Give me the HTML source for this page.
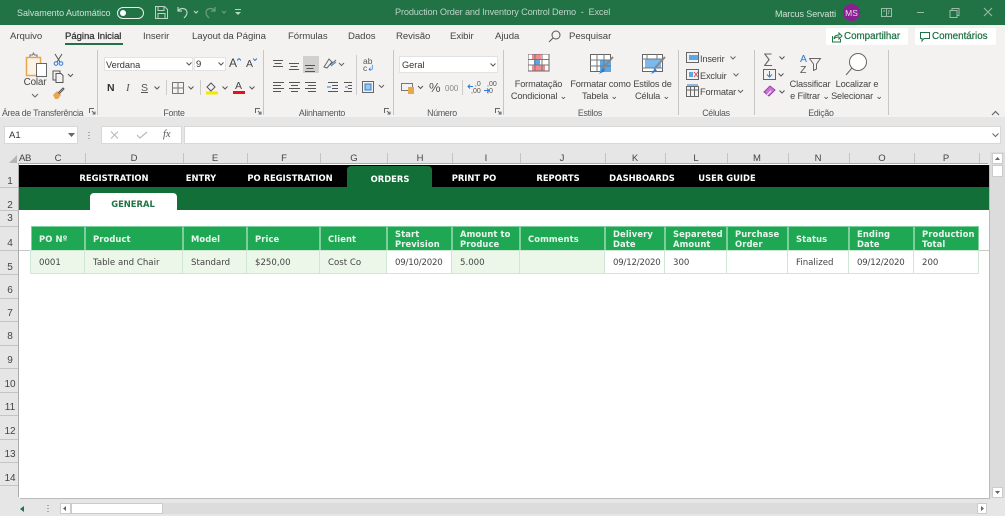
<!DOCTYPE html>
<html><head><meta charset="utf-8"><style>
html,body{margin:0;padding:0}
body{width:1005px;height:516px;overflow:hidden;position:relative;background:#e6e6e6;font-family:"Liberation Sans",sans-serif;color:#444;filter:blur(.3px)}
.t,.b,svg{position:absolute}
.t{white-space:nowrap;line-height:12px}
.c{transform:translateX(-50%);text-align:center}
.rb{font-size:9.2px;color:#444;letter-spacing:-.15px}
.tab{font-size:9.6px;color:#444;top:31px;letter-spacing:-.05px}
.grp{font-size:8.8px;color:#555;top:107px;letter-spacing:-.25px}
.nav{font:bold 8.4px "DejaVu Sans",sans-serif;color:#fff;top:173px}
.h{background:#1ea854;border:1px solid #7fcf9d;border-bottom:none;box-sizing:border-box;top:226px;height:24px;color:#eaf5ee;font:bold 8.4px/10px "DejaVu Sans",sans-serif;padding:0 0 0 7px;display:flex;align-items:center;letter-spacing:.1px}
.d{top:250px;height:24px;box-sizing:border-box;border:1px solid #cfe8d5;border-left:none;color:#444;font:8.6px/24px "DejaVu Sans",sans-serif;padding-left:8px;background:#fff}
.dt{letter-spacing:-.2px}
.g{background:#edf7e9}
.col{font-size:9.5px;color:#444;top:152.5px}
.rn{font-size:10px;color:#444;left:1px;width:18px;text-align:center}
.rl{left:0;width:19px;height:1px;background:#c4c4c4}
.cl{top:153px;width:1px;height:11px;background:#c4c4c4}
</style></head><body>
<div class="b" style="left:0;top:0;width:1005px;height:25px;background:#217346"></div>
<div class="t" style="left:17px;top:7px;font-size:9px;color:#cfe0d6;letter-spacing:-.05px">Salvamento Automático</div>
<div class="b" style="left:117px;top:7px;width:25px;height:10px;border:1px solid #e8f0eb;border-radius:7px"></div>
<div class="b" style="left:120px;top:9.5px;width:6px;height:6px;background:#fff;border-radius:50%"></div>
<svg style="left:155px;top:6px" width="13" height="13" fill="none" stroke="#bcd3c6"><path d="M.5.5h9l3 3v9H.5zM3 .5v4h6v-4M3 12.500v-5h7v5"/></svg>
<svg style="left:176px;top:6px" width="24" height="13" fill="none" stroke="#bcd3c6" stroke-width="1.200"><path d="M2 1v4h4M2 5c3-4 9-3 9 2 0 2-2 4-3 5M18 5l2 2 2-2"/></svg>
<svg style="left:205px;top:6px" width="24" height="13" fill="none" stroke="#6d9f83" stroke-width="1.200"><path d="M10 1v4H6M10 5C7 1 1 2 1 7c0 2 2 4 3 5M17 5l2 2 2-2"/></svg>
<svg style="left:235px;top:9px" width="7" height="7" fill="#bcd3c6"><path d="M0 0h6v1H0zM0 3h6L3 6z"/></svg>
<div class="t" style="left:395px;top:6px;font-size:9.2px;color:#bcd3c6;letter-spacing:-.15px">Production Order and Inventory Control Demo &nbsp;-&nbsp; Excel</div>
<div class="t" style="left:775px;top:7.5px;font-size:9px;color:#cfe0d6;letter-spacing:-.1px">Marcus Servatti</div>
<div class="b" style="left:843px;top:4px;width:17px;height:17px;border-radius:50%;background:#8a1f92"></div>
<div class="t c" style="left:851.500px;top:7px;font-size:8.500px;color:#eadcec">MS</div>
<svg style="left:880px;top:7px" width="113" height="11" fill="none" stroke="#9dbdaa"><path d="M1.500 1.500h10v8h-10zM6.500 2v7M3 4h2M8 4h2M9 5.500l-1 1.500"/><path d="M37 5.500h7M70 3.500h7v7h-7zM72 3.500v-2h7v7h-2M104 1l8 8M112 1l-8 8"/></svg>

<!-- ribbon -->
<div class="b" style="left:0;top:25px;width:1005px;height:92px;background:#f3f2f1"></div>
<div class="t tab" style="left:10px">Arquivo</div>
<div class="t tab" style="left:65px;font-weight:400;color:#333;-webkit-text-stroke:.25px #333">Página Inicial</div>
<div class="b" style="left:65px;top:43px;width:58px;height:2px;background:#217346"></div>
<div class="t tab" style="left:143px">Inserir</div>
<div class="t tab" style="left:192px">Layout da Página</div>
<div class="t tab" style="left:288px">Fórmulas</div>
<div class="t tab" style="left:348px">Dados</div>
<div class="t tab" style="left:396px">Revisão</div>
<div class="t tab" style="left:450px">Exibir</div>
<div class="t tab" style="left:495px">Ajuda</div>
<svg style="left:548px;top:30px" width="13" height="13" fill="none" stroke="#555"><circle cx="8" cy="5" r="4"/><path d="M5 8l-4 4"/></svg>
<div class="t tab" style="left:569px">Pesquisar</div>
<div class="b" style="left:826px;top:28px;width:82px;height:17px;background:#fff;border-radius:2px"></div>
<svg style="left:831px;top:31px" width="12" height="12" fill="none" stroke="#217346"><path d="M1.500 5v6h8V8M3 8c0-3 2-4 5-4V2l3 3-3 3V6C6 6 4 6 3 8z"/></svg>
<div class="t" style="left:844px;top:30.500px;font-size:9.800px;color:#217346;-webkit-text-stroke:.25px #217346">Compartilhar</div>
<div class="b" style="left:915px;top:28px;width:81px;height:17px;background:#fff;border-radius:2px"></div>
<svg style="left:920px;top:32px" width="11" height="11" fill="none" stroke="#217346"><path d="M.500.500h9v6H4L2 9V6.500H.500z"/></svg>
<div class="t" style="left:932px;top:30.500px;font-size:9.800px;color:#217346;-webkit-text-stroke:.25px #217346">Comentários</div>

<!-- separators -->
<div class="b" style="left:97px;top:50px;width:1px;height:65px;background:#c8c6c4"></div>
<div class="b" style="left:263px;top:50px;width:1px;height:65px;background:#c8c6c4"></div>
<div class="b" style="left:393px;top:50px;width:1px;height:65px;background:#c8c6c4"></div>
<div class="b" style="left:503px;top:50px;width:1px;height:65px;background:#c8c6c4"></div>
<div class="b" style="left:678px;top:50px;width:1px;height:65px;background:#c8c6c4"></div>
<div class="b" style="left:754px;top:50px;width:1px;height:65px;background:#c8c6c4"></div>
<div class="b" style="left:888px;top:50px;width:1px;height:65px;background:#c8c6c4"></div>

<!-- clipboard -->
<svg style="left:25px;top:52px" width="23" height="26" fill="none"><path d="M1.500 5.500h14v18H1.500z" stroke="#e6a455" stroke-width="1.500" fill="#fdf3e4"/><path d="M5 5V3h2.500l1-2 1 2H12v2" stroke="#777"/><path d="M11.500 11.500h10v13h-10z" stroke="#666" fill="#fff"/></svg>
<div class="t rb c" style="left:35px;top:77px;font-size:9.800px">Colar</div>
<svg style="left:31px;top:93px" width="8" height="5" fill="none" stroke="#666"><path d="M1 1l3 3 3-3"/></svg>
<svg style="left:53px;top:53px" width="11" height="13" fill="none" stroke="#555"><path d="M2 1l5 8M9 1L4 9"/><circle cx="3" cy="10.500" r="1.800" stroke="#2b7cd3"/><circle cx="8" cy="10.500" r="1.800" stroke="#2b7cd3"/></svg>
<svg style="left:52px;top:70px" width="22" height="13" fill="none" stroke="#555"><path d="M1 1h7v9H1z"/><path d="M4 3.500h5l2 2v7H4z" fill="#f3f2f1"/><path d="M16 4l2.500 2.500L21 4"/></svg>
<svg style="left:52px;top:87px" width="13" height="13" fill="none"><path d="M1 8l4-4 4 4-3 4H3z" fill="#eda64b"/><path d="M6 6l5-5 1 1-5 5" stroke="#555"/></svg>
<div class="t grp" style="left:2px">Área de Transferência</div>
<svg style="left:89px;top:108px" width="7" height="7" fill="none" stroke="#666"><path d="M.500 5V.500H5M3 3l3 3M6 3.500V6H3.500"/></svg>

<!-- font -->
<div class="b" style="left:104px;top:57px;width:89px;height:14px;background:#fff;border:1px solid #e2e2e2;box-sizing:border-box"></div>
<div class="t" style="left:106px;top:58.500px;font-size:9.200px;color:#333">Verdana</div>
<svg style="left:186px;top:62px" width="6" height="4" fill="none" stroke="#555"><path d="M.500.500L3 3 5.500.500"/></svg>
<div class="b" style="left:194px;top:57px;width:32px;height:14px;background:#fff;border:1px solid #e2e2e2;box-sizing:border-box"></div>
<div class="t" style="left:196px;top:58.500px;font-size:9.500px;color:#333">9</div>
<svg style="left:218px;top:62px" width="6" height="4" fill="none" stroke="#555"><path d="M.500.500L3 3 5.500.500"/></svg>
<div class="t" style="left:229px;top:57px;font-size:12px;color:#444">A</div>
<svg style="left:237px;top:58px" width="4" height="3" fill="none" stroke="#2b7cd3"><path d="M0 2.500L2 .5l2 2"/></svg>
<div class="t" style="left:246px;top:58px;font-size:10.500px;color:#444">A</div>
<svg style="left:253px;top:58px" width="4" height="3" fill="none" stroke="#2b7cd3"><path d="M0 .5l2 2 2-2"/></svg>
<div class="t" style="left:107px;top:82px;font:bold 10.500px/12px 'Liberation Sans',sans-serif;color:#333">N</div>
<div class="t" style="left:126px;top:82px;font:italic 11px/12px 'Liberation Serif',serif;color:#555">I</div>
<div class="t" style="left:141px;top:82px;font-size:10.500px;color:#555;text-decoration:underline">S</div>
<svg style="left:154px;top:86px" width="6" height="4" fill="none" stroke="#555"><path d="M.500.500L3 3 5.500.500"/></svg>
<div class="b" style="left:166px;top:80px;width:1px;height:15px;background:#ccc"></div>
<svg style="left:172px;top:82px" width="12" height="12" fill="none" stroke="#777"><path d="M.500.500h11v11H.500zM6 .500v11M.500 6h11"/></svg>
<svg style="left:188px;top:86px" width="6" height="4" fill="none" stroke="#555"><path d="M.500.500L3 3 5.500.500"/></svg>
<div class="b" style="left:200px;top:80px;width:1px;height:15px;background:#ccc"></div>
<svg style="left:206px;top:81px" width="12" height="14" fill="none"><path d="M1 6l4-4 4 4-4 4z" stroke="#555"/><rect x="0" y="10.500" width="12" height="3" fill="#f5e800"/></svg>
<svg style="left:222px;top:86px" width="6" height="4" fill="none" stroke="#555"><path d="M.500.500L3 3 5.500.500"/></svg>
<div class="t" style="left:235px;top:80px;font-size:10.500px;color:#444">A</div>
<div class="b" style="left:233px;top:91px;width:12px;height:3px;background:#e80f1a"></div>
<svg style="left:249px;top:86px" width="6" height="4" fill="none" stroke="#555"><path d="M.500.500L3 3 5.500.500"/></svg>
<div class="t grp c" style="left:174px">Fonte</div>
<svg style="left:255px;top:108px" width="7" height="7" fill="none" stroke="#666"><path d="M.500 5V.500H5M3 3l3 3M6 3.500V6H3.500"/></svg>

<!-- alignment -->
<div class="b" style="left:303px;top:56px;width:16px;height:17px;background:#d2d0ce"></div>
<svg style="left:272px;top:60px" width="48" height="12" fill="none" stroke="#555"><path d="M1 .500h10M2.500 3.500h7M1 6.500h10M17 3.500h10M18.500 6.500h7M17 9.500h10M33 5.500h10M34.500 8.500h7M33 11.500h10"/></svg>
<svg style="left:323px;top:57px" width="22" height="13" fill="none" stroke="#666"><path d="M1 10l5-8 3 3-5 6zM7 8l6-5" /><path d="M8 9l5-4" stroke="#2b7cd3"/><path d="M16 6l2.500 2.500L21 6"/></svg>
<svg style="left:272px;top:82px" width="80" height="11" fill="none" stroke="#555"><path d="M1 .500h11M1 3.500h8M1 6.500h11M1 9.500h8M17 .500h11M19 3.500h7M17 6.500h11M19 9.500h7M33 .500h11M36 3.500h8M33 6.500h11M36 9.500h8M56 .500h10M60 3.500h6M60 6.500h6M56 9.500h10M72 .500h8M76 3.500h4M76 6.500h4M72 9.500h8"/><path d="M59 5h-4M73 5h3" stroke="#2b7cd3"/></svg>
<div class="b" style="left:356px;top:55px;width:1px;height:40px;background:#ccc"></div>
<div class="t" style="left:363px;top:58px;font-size:8.500px;line-height:7px;color:#555">ab<br>c<span style="color:#2b7cd3">↲</span></div>
<svg style="left:362px;top:81px" width="24" height="12" fill="none" stroke="#666"><path d="M.500.500h11v11H.500z"/><path d="M3 3h6v6H3z" fill="#9cc7ec" stroke="#2b7cd3"/><path d="M17 4l2.500 2.500L22 4"/></svg>
<div class="t grp c" style="left:322px">Alinhamento</div>
<svg style="left:384px;top:108px" width="7" height="7" fill="none" stroke="#666"><path d="M.500 5V.500H5M3 3l3 3M6 3.500V6H3.500"/></svg>

<!-- number -->
<div class="b" style="left:399px;top:56px;width:99px;height:17px;background:#fff;border:1px solid #e2e2e2;box-sizing:border-box"></div>
<div class="t" style="left:402px;top:58.500px;font-size:9.200px;color:#333">Geral</div>
<svg style="left:490px;top:63px" width="6" height="4" fill="none" stroke="#555"><path d="M.500.500L3 3 5.500.500"/></svg>
<svg style="left:401px;top:82px" width="24" height="12" fill="none"><rect x=".5" y="1.500" width="11" height="7" stroke="#777"/><rect x="7" y="5" width="6" height="7" fill="#eda64b"/><path d="M17 4l2.500 2.500L22 4" stroke="#555"/></svg>
<div class="t" style="left:429px;top:81px;font-size:13px;line-height:13px;color:#555">%</div>
<div class="t" style="left:445px;top:83px;font-size:8px;color:#888">000</div>
<div class="b" style="left:462px;top:80px;width:1px;height:15px;background:#ccc"></div>
<div class="t" style="left:471px;top:81px;font-size:7px;line-height:7px;color:#555;text-align:right">,0<br>,00</div>
<svg style="left:467px;top:84px" width="6" height="6" fill="none" stroke="#2b7cd3"><path d="M6 2.500H1M3 .5L1 2.500l2 2"/></svg>
<div class="t" style="left:487px;top:81px;font-size:7px;line-height:7px;color:#555">,00<br>,0</div>
<svg style="left:484px;top:88px" width="6" height="6" fill="none" stroke="#2b7cd3"><path d="M0 2.500h5M3 .5l2 2-2 2"/></svg>
<div class="t grp c" style="left:442px">Número</div>
<svg style="left:495px;top:108px" width="7" height="7" fill="none" stroke="#666"><path d="M.500 5V.500H5M3 3l3 3M6 3.500V6H3.500"/></svg>

<!-- styles -->
<svg style="left:528px;top:54px" width="22" height="18"><rect x="0" y="0" width="21" height="17" fill="#fff" stroke="#666"/><rect x="4" y="0.500" width="9" height="5" fill="#f28b90"/><rect x="4" y="11" width="13" height="5.500" fill="#f28b90"/><rect x="6" y="6" width="6" height="5" fill="#5aa7e6"/><path d="M7 0v17M14 0v17M0 5.500h21M0 11h21" stroke="#777" fill="none"/></svg>
<div class="t rb c" style="left:538.500px;top:78px">Formatação</div>
<div class="t rb c" style="left:539px;top:89.500px">Condicional ⌄</div>
<svg style="left:590px;top:54px" width="24" height="22" fill="none"><rect x=".5" y=".5" width="20" height="17" fill="#fff" stroke="#666"/><rect x="10" y="6" width="11" height="12" fill="#5aa7e6"/><path d="M7 0v17M14 0v17M0 6h21M0 12h21" stroke="#777"/><path d="M23 3L12 15" stroke="#888" stroke-width="2"/><path d="M13 14l-4 6 6-3z" fill="#2b7cd3"/></svg>
<div class="t rb c" style="left:600.500px;top:78px">Formatar como</div>
<div class="t rb c" style="left:600px;top:89.500px">Tabela ⌄</div>
<svg style="left:642px;top:54px" width="24" height="22" fill="none"><rect x=".5" y=".5" width="20" height="17" fill="#fff" stroke="#666"/><rect x="3" y="5" width="16" height="9" fill="#7bb8ec"/><path d="M0 5h21M0 14h21M5 0v5M15 0v5" stroke="#777"/><path d="M23 3L12 15" stroke="#888" stroke-width="2"/><path d="M13 14l-4 6 6-3z" fill="#2b7cd3"/></svg>
<div class="t rb c" style="left:652.500px;top:78px">Estilos de</div>
<div class="t rb c" style="left:652.500px;top:89.500px">Célula ⌄</div>
<div class="t grp c" style="left:590px">Estilos</div>

<!-- cells -->
<svg style="left:686px;top:52px" width="13" height="48" fill="none"><rect x=".5" y=".5" width="12" height="10" stroke="#666"/><rect x="3" y="3" width="9" height="5" fill="#5aa7e6"/><rect x=".5" y="17.500" width="12" height="10" stroke="#666"/><rect x="3" y="20" width="4" height="5" fill="#5aa7e6"/><path d="M8 20l4 5M12 20l-4 5" stroke="#e04848"/><rect x=".5" y="34.500" width="12" height="10" stroke="#666"/><path d="M.5 38h12M4.500 34v10M8.500 34v10" stroke="#666"/><path d="M1 33h11" stroke="#2b7cd3"/></svg>
<div class="t rb" style="left:700px;top:52.500px">Inserir</div>
<div class="t rb" style="left:700px;top:69.500px">Excluir</div>
<div class="t rb" style="left:700px;top:86px">Formatar</div>
<svg style="left:730px;top:56px" width="14" height="39" fill="none" stroke="#666"><path d="M.500.500L3 3 5.500.500M3.500 17.500L6 20 8.500 17.500M8 34l2.500 2.500L13 34"/></svg>
<div class="t grp c" style="left:716px">Células</div>

<!-- editing -->
<div class="t" style="left:763px;top:51px;font-size:14px;line-height:14px;color:#666">∑</div>
<svg style="left:779px;top:56px" width="6" height="4" fill="none" stroke="#555"><path d="M.500.500L3 3 5.500.500"/></svg>
<svg style="left:763px;top:69px" width="13" height="11" fill="none"><rect x=".5" y=".5" width="12" height="10" stroke="#666"/><path d="M6.500 2v6M4 5.500l2.500 2.500L9 5.500" stroke="#2b7cd3"/></svg>
<svg style="left:778px;top:73px" width="6" height="4" fill="none" stroke="#555"><path d="M.500.500L3 3 5.500.500"/></svg>
<svg style="left:763px;top:85px" width="13" height="12" fill="none"><path d="M1 7l6-6 5 4-6 6z" fill="#c878d2" stroke="#a03bb0"/><path d="M4 10l4-4" stroke="#fff"/></svg>
<svg style="left:779px;top:90px" width="6" height="4" fill="none" stroke="#555"><path d="M.500.500L3 3 5.500.500"/></svg>
<div class="t" style="left:800px;top:54px;font-size:10.500px;color:#2b7cd3;line-height:11px">A</div>
<div class="t" style="left:800px;top:65px;font-size:10.500px;color:#555;line-height:11px">Z</div>
<svg style="left:809px;top:58px" width="13" height="13" fill="none" stroke="#666"><path d="M.5.500h11L7.500 6v5l-3 1.500V6z"/></svg>
<div class="t rb c" style="left:810px;top:78px">Classificar</div>
<div class="t rb c" style="left:810px;top:89.500px">e Filtrar ⌄</div>
<svg style="left:845px;top:52px" width="24" height="24" fill="none" stroke="#666"><circle cx="13" cy="10" r="8.500" fill="#fff"/><path d="M7 16l-6 7"/></svg>
<div class="t rb c" style="left:857px;top:78px">Localizar e</div>
<div class="t rb c" style="left:857px;top:89.500px">Selecionar ⌄</div>
<div class="t grp c" style="left:821px">Edição</div>
<svg style="left:991px;top:110px" width="9" height="6" fill="none" stroke="#666" stroke-width="1.200"><path d="M1 5l3.500-3.500L8 5"/></svg>

<!-- formula bar -->
<div class="b" style="left:4px;top:126px;width:74px;height:18px;background:#fff;border:1px solid #d8d8d8;box-sizing:border-box"></div>
<div class="t" style="left:9px;top:129.500px;font-size:9.500px;color:#333">A1</div>
<svg style="left:68px;top:133px" width="7" height="4" fill="#666"><path d="M0 0h7L3.500 4z"/></svg>
<svg style="left:88px;top:132px" width="3" height="8" fill="#aaa"><path d="M0 0h2v1H0zM0 3h2v1H0zM0 6h2v1H0z"/></svg>
<div class="b" style="left:101px;top:126px;width:81px;height:18px;background:#fff;border:1px solid #d8d8d8;box-sizing:border-box"></div>
<svg style="left:110px;top:131px" width="40" height="9" fill="none" stroke="#bbb" stroke-width="1.200"><path d="M1 .5l7 7M8 .5l-7 7M27 4l3 3 7-6"/></svg>
<div class="t" style="left:163px;top:129px;font:italic 10.500px/12px 'Liberation Serif',serif;color:#555">fx</div>
<div class="b" style="left:184px;top:126px;width:817px;height:18px;background:#fff;border:1px solid #d8d8d8;box-sizing:border-box"></div>
<svg style="left:992px;top:133px" width="7" height="5" fill="none" stroke="#666"><path d="M.5.500L3.500 3.500 6.500.500"/></svg>

<!-- headers -->
<div class="b" style="left:0;top:152px;width:989px;height:12px;background:#e6e6e6"></div>
<div class="b" style="left:0;top:164px;width:19px;height:334px;background:#e6e6e6"></div>
<svg style="left:9px;top:155px" width="9" height="8" fill="#b5b5b5"><path d="M8 0v8H0z"/></svg>
<div class="t" style="left:19px;top:152.500px;font-size:9.500px;color:#444;letter-spacing:-.3px">AB</div>
<div class="t col c" style="left:58px">C</div>
<div class="t col c" style="left:134px">D</div>
<div class="t col c" style="left:215px">E</div>
<div class="t col c" style="left:284px">F</div>
<div class="t col c" style="left:354px">G</div>
<div class="t col c" style="left:420px">H</div>
<div class="t col c" style="left:486px">I</div>
<div class="t col c" style="left:562px">J</div>
<div class="t col c" style="left:635px">K</div>
<div class="t col c" style="left:696px">L</div>
<div class="t col c" style="left:757px">M</div>
<div class="t col c" style="left:818px">N</div>
<div class="t col c" style="left:882px">O</div>
<div class="t col c" style="left:946px">P</div>
<div class="b cl" style="left:85px"></div><div class="b cl" style="left:183px"></div><div class="b cl" style="left:247px"></div><div class="b cl" style="left:320px"></div><div class="b cl" style="left:387px"></div><div class="b cl" style="left:452px"></div><div class="b cl" style="left:520px"></div><div class="b cl" style="left:605px"></div><div class="b cl" style="left:665px"></div><div class="b cl" style="left:727px"></div><div class="b cl" style="left:788px"></div><div class="b cl" style="left:849px"></div><div class="b cl" style="left:914px"></div><div class="b cl" style="left:979px"></div>

<div class="b rl" style="top:187px"></div><div class="b rl" style="top:210px"></div><div class="b rl" style="top:226px"></div><div class="b rl" style="top:250px"></div><div class="b rl" style="top:274px"></div><div class="b rl" style="top:298px"></div><div class="b rl" style="top:321px"></div><div class="b rl" style="top:345px"></div><div class="b rl" style="top:368px"></div><div class="b rl" style="top:392px"></div><div class="b rl" style="top:415px"></div><div class="b rl" style="top:439px"></div><div class="b rl" style="top:462px"></div><div class="b rl" style="top:485px"></div>
<div class="t rn" style="top:176px">1</div><div class="t rn" style="top:199.500px">2</div><div class="t rn" style="top:213px">3</div><div class="t rn" style="top:238px">4</div><div class="t rn" style="top:262px">5</div><div class="t rn" style="top:285px">6</div><div class="t rn" style="top:308px">7</div><div class="t rn" style="top:331px">8</div><div class="t rn" style="top:355px">9</div><div class="t rn" style="top:379px">10</div><div class="t rn" style="top:402px">11</div><div class="t rn" style="top:426px">12</div><div class="t rn" style="top:449px">13</div><div class="t rn" style="top:473px">14</div>

<!-- sheet -->
<div class="b" style="left:19px;top:164px;width:970px;height:334px;background:#fff;box-shadow:-1px -1px 0 #aaa,1px 1px 0 #bbb"></div>
<div class="b" style="left:19px;top:165px;width:970px;height:22px;background:#000"></div>
<div class="b" style="left:19px;top:187px;width:970px;height:23px;background:#126f37"></div>
<div class="b" style="left:347px;top:166px;width:85px;height:22px;background:#126f37;border-radius:4px 4px 0 0"></div>
<div class="b" style="left:90px;top:193px;width:87px;height:18px;background:#fff;border-radius:4px 4px 0 0"></div>
<div class="t nav c" style="left:114px">REGISTRATION</div>
<div class="t nav c" style="left:201px">ENTRY</div>
<div class="t nav c" style="left:290px">PO REGISTRATION</div>
<div class="t nav c" style="left:390px;top:173.500px">ORDERS</div>
<div class="t nav c" style="left:474px">PRINT PO</div>
<div class="t nav c" style="left:558px">REPORTS</div>
<div class="t nav c" style="left:642px">DASHBOARDS</div>
<div class="t nav c" style="left:727px">USER GUIDE</div>
<div class="t nav c" style="left:133px;top:199px;color:#217346">GENERAL</div>

<div class="b" style="left:19px;top:250px;width:970px;height:1px;background:#c8c8c8"></div>

<div class="b h" style="left:31px;width:54px">PO Nº</div>
<div class="b h" style="left:85px;width:98px">Product</div>
<div class="b h" style="left:183px;width:64px">Model</div>
<div class="b h" style="left:247px;width:73px">Price</div>
<div class="b h" style="left:320px;width:67px">Client</div>
<div class="b h" style="left:387px;width:65px">Start<br>Prevision</div>
<div class="b h" style="left:452px;width:68px">Amount to<br>Produce</div>
<div class="b h" style="left:520px;width:85px">Comments</div>
<div class="b h" style="left:605px;width:60px">Delivery<br>Date</div>
<div class="b h" style="left:665px;width:62px">Separeted<br>Amount</div>
<div class="b h" style="left:727px;width:61px">Purchase<br>Order</div>
<div class="b h" style="left:788px;width:61px">Status</div>
<div class="b h" style="left:849px;width:65px">Ending<br>Date</div>
<div class="b h" style="left:914px;width:65px">Production<br>Total</div>

<div class="b d g" style="left:30px;width:55px;border-left:1px solid #cfe8d5">0001</div>
<div class="b d g" style="left:85px;width:98px">Table and Chair</div>
<div class="b d g" style="left:183px;width:64px">Standard</div>
<div class="b d g" style="left:247px;width:73px">$250,00</div>
<div class="b d g" style="left:320px;width:67px">Cost Co</div>
<div class="b d dt" style="left:387px;width:65px">09/10/2020</div>
<div class="b d g" style="left:452px;width:68px">5.000</div>
<div class="b d g" style="left:520px;width:85px"></div>
<div class="b d dt" style="left:605px;width:60px">09/12/2020</div>
<div class="b d" style="left:665px;width:62px">300</div>
<div class="b d" style="left:727px;width:61px"></div>
<div class="b d" style="left:788px;width:61px">Finalized</div>
<div class="b d dt" style="left:849px;width:65px">09/12/2020</div>
<div class="b d" style="left:914px;width:65px">200</div>

<!-- scrollbars -->
<div class="b" style="left:990px;top:152px;width:15px;height:346px;background:#dcdcdc"></div>
<div class="b" style="left:992px;top:153px;width:11px;height:11px;background:#fff;border:1px solid #ccc;box-sizing:border-box"></div>
<svg style="left:995px;top:157px" width="5" height="3" fill="#666"><path d="M2.500 0L5 3H0z"/></svg>
<div class="b" style="left:992px;top:165px;width:11px;height:12px;background:#fff;border:1px solid #ccc;box-sizing:border-box"></div>
<div class="b" style="left:992px;top:487px;width:11px;height:11px;background:#fff;border:1px solid #ccc;box-sizing:border-box"></div>
<svg style="left:995px;top:491px" width="5" height="3" fill="#666"><path d="M0 0h5L2.500 3z"/></svg>

<div class="b" style="left:0;top:499px;width:1005px;height:17px;background:#e6e6e6"></div>
<svg style="left:20px;top:506px" width="4" height="6" fill="#217346"><path d="M4 0v6L0 3z"/></svg>
<svg style="left:47px;top:505px" width="2" height="8" fill="#aaa"><path d="M0 0h2v1H0zM0 3h2v1H0zM0 6h2v1H0z"/></svg>
<div class="b" style="left:60px;top:503px;width:927px;height:11px;background:#dcdcdc"></div>
<div class="b" style="left:60px;top:503px;width:11px;height:11px;background:#fff;border:1px solid #ccc;box-sizing:border-box"></div>
<svg style="left:63px;top:506px" width="3" height="5" fill="#666"><path d="M3 0v5L0 2.500z"/></svg>
<div class="b" style="left:71px;top:503px;width:92px;height:11px;background:#fff;border:1px solid #ccc;box-sizing:border-box"></div>
<div class="b" style="left:977px;top:503px;width:10px;height:11px;background:#fff;border:1px solid #ccc;box-sizing:border-box"></div>
<svg style="left:981px;top:506px" width="3" height="5" fill="#666"><path d="M0 0v5l3-2.500z"/></svg>
</body></html>
